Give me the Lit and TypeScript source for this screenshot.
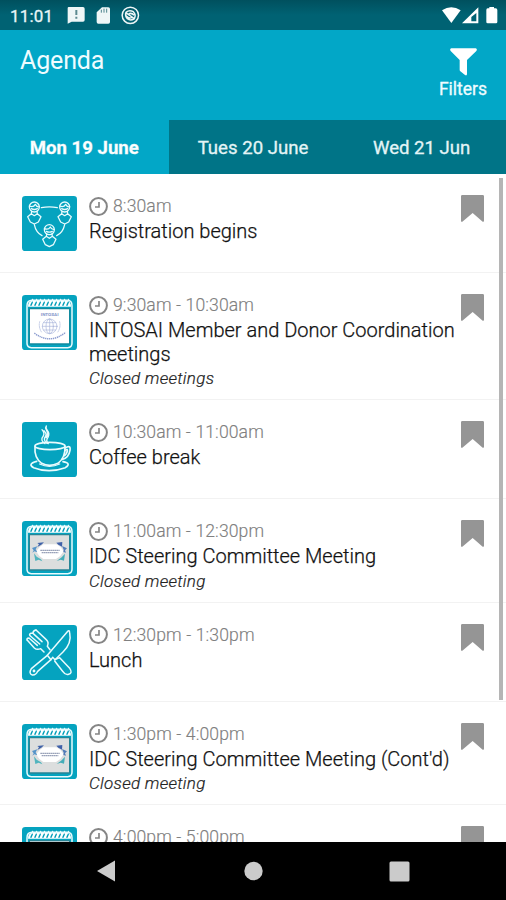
import { LitElement, html, svg, css, nothing } from "lit";
import { customElement, property, state } from "lit/decorators.js";
import { classMap } from "lit/directives/class-map.js";

type Kind = "people" | "seal" | "coffee" | "idc" | "lunch";
interface Session {
  kind: Kind;
  time: string;
  title?: string;
  note?: string;
}

const sessions: Session[] = [
  { kind: "people", time: "8:30am", title: "Registration begins" },
  { kind: "seal", time: "9:30am - 10:30am", title: "INTOSAI Member and Donor Coordination meetings", note: "Closed meetings" },
  { kind: "coffee", time: "10:30am - 11:00am", title: "Coffee break" },
  { kind: "idc", time: "11:00am - 12:30pm", title: "IDC Steering Committee Meeting", note: "Closed meeting" },
  { kind: "lunch", time: "12:30pm - 1:30pm", title: "Lunch" },
  { kind: "idc", time: "1:30pm - 4:00pm", title: "IDC Steering Committee Meeting (Cont'd)", note: "Closed meeting" },
  { kind: "idc", time: "4:00pm - 5:00pm" },
];

const person = (x: number, y: number) => svg`
  <g transform="translate(${x} ${y})">
    <circle r="15" cy="-17"/>
    <path d="M-15-20Q-3-15 3-25Q7-16 15-18M-9-12Q0-7 9-12"/>
    <path d="M-8-4L-9 3L-20 12L-12 28L0 34L12 28L20 12L9 3L8-4M-9 3L0 9L9 3"/>
  </g>`;

const calendar = svg`
  <path d="M15 145V32Q15 16 30 16H136Q150 16 150 32V145Q150 158 137 158H28Q15 158 15 145Z" stroke-width="4.5"/>
  <path d="M18 35Q18 18 30 18H135Q147 18 147 35Z" fill="#fff" stroke="none"/>
  <path d="M27 31L31 21M39 31L43 21M51 31L55 21M63 31L67 21M75 31L79 21M87 31L91 21M99 31L103 21M111 31L115 21M123 31L127 21M135 31L139 21" stroke="#05a0ba" stroke-width="4.5"/>
  <path d="M29 20L32 13M41 20L44 13M53 20L56 13M65 20L68 13M77 20L80 13M89 20L92 13M101 20L104 13M113 20L116 13M125 20L128 13M137 20L140 13" stroke-width="4"/>`;

const art: Record<Kind, unknown> = {
  people: svg`
    <g stroke-width="3.8">
      ${person(37, 50)}${person(128, 50)}${person(82, 118)}
      <path d="M58 35Q82 30 106 35M37 86Q42 110 60 119M104 119Q123 110 128 86"/>
    </g>`,
  seal: svg`
    ${calendar}
    <rect x="22" y="41" width="121" height="106" rx="2" fill="#fff" stroke="#128a9e" stroke-width="4"/>
    <g stroke="#a9b5db" stroke-width="2">
      <circle cx="83" cy="94" r="22"/>
      <ellipse cx="83" cy="94" rx="11" ry="22"/>
      <path d="M83 72V116M61 94H105M65 83H101M65 105H101"/>
      <path d="M53 80Q49 97 59 112M113 80Q117 97 107 112" stroke-dasharray="4 3"/>
      <path d="M37 114Q83 150 131 112" stroke="#8d9dd0" stroke-width="4.5" stroke-linecap="butt" stroke-dasharray="4 2"/>
    </g>
    <text x="83" y="64" class="tiny" textLength="53" lengthAdjust="spacingAndGlyphs">INTOSAI</text>`,
  coffee: svg`
    <g stroke-width="5">
      <ellipse cx="84" cy="72" rx="45" ry="11"/>
      <path d="M39 73Q36 107 59 124Q82 136 108 124Q131 106 129 73"/>
      <path d="M129 78Q147 67 144 85Q140 108 121 112M130 85Q138 79 136 88Q133 99 125 102"/>
      <path d="M44 118Q15 126 35 137Q80 155 130 137Q150 124 123 119"/>
      <path d="M53 126Q82 140 113 126" stroke-width="4"/>
      <path d="M69 65Q53 55 64 42Q69 34 60 23M75 64Q62 54 71 42Q75 35 66 26M73 47Q80 35 73 24Q69 17 73 12Q70 18 76 25Q84 34 78 46Q70 56 79 65" stroke-width="4"/>
    </g>`,
  idc: svg`
    ${calendar}
    <rect x="22" y="41" width="121" height="106" rx="2" fill="#dcdede" stroke="#278596" stroke-width="4"/>
    <path d="M54 77L64 70H103L115 77L125 91L115 105L102 114H64L52 105L42 91Z" fill="#fff" stroke="none"/>
    <g stroke="none">
      <path d="M46 66L66 64L58 71L46 78L51 70Z" fill="#3f62a8"/>
      <path d="M30 81L46 76L41 85L46 94L37 91L31 95L35 88Z" fill="#5694c9"/>
      <path d="M36 97L44 107L57 115L61 121L50 116L40 120Z" fill="#51b4be"/>
      <path d="M103 65L121 63L120 77L109 71Z" fill="#3e60a9"/>
      <path d="M120 75L135 82L129 88L132 95L124 93L125 86Z" fill="#527cb8"/>
      <path d="M129 98L126 119L116 116L104 120L119 109Z" fill="#45adb8"/>
    </g>
    <path d="M55 88H113M59 95H109" stroke="#98a1b8" stroke-width="3.5" stroke-linecap="butt" stroke-dasharray="5 1"/>`,
  lunch: svg`
    <g stroke-width="4.5">
      <path d="M16 46L37 69Q45 76 56 71L66 81M42 15L72 43Q82 51 76 64L84 74"/>
      <path d="M16 46Q12 39 21 39L46 61M25 33L53 57M33 25L60 50M25 33Q20 28 26 25L33 25Q32 17 42 15"/>
      <path d="M76 91L136 20Q142 13 143 23Q150 55 123 81L99 104L92 97L87 104L76 91"/>
      <path d="M76 91L28 131Q19 146 31 150Q42 151 47 139L87 104"/>
      <path d="M99 104L113 98L143 130Q153 144 140 148Q130 151 123 140L98 108"/>
      <circle cx="36" cy="138" r="2"/>
    </g>`,
};

@customElement("session-row")
export class SessionRow extends LitElement {
  @property({ attribute: false }) session!: Session;

  static styles = css`
    :host { display: block; border-bottom: 1px solid #f2f2f2; box-sizing: border-box; min-height: 99px; }
    .row { display: flex; padding: 22px 22px 0 22px; }
    .tile { flex: none; width: 55px; height: 55px; display: block; }
    .copy { flex: 1; min-width: 0; padding: 0 0 10px 12px; margin-right: -8px; }
    .when { display: flex; align-items: center; gap: 5px; height: 20px; font-size: 17.6px; font-weight: 300; color: #808080; letter-spacing: 0.1px; -webkit-text-stroke: 0.15px #808080; }
    .clock { width: 19px; height: 19px; flex: none; }
    .title { font-size: 20px; font-weight: 300; line-height: 23.5px; color: #111; margin-top: 4px; -webkit-text-stroke: 0.25px #111; }
    .note { font-size: 17px; line-height: 21px; padding-top: 2px; font-weight: 300; font-style: italic; color: #222; letter-spacing: 0.28px; -webkit-text-stroke: 0.2px #222; }
    .mark { flex: none; width: 23px; height: 27px; margin-top: -1px; }
    .tiny { font: bold 12px Roboto, sans-serif; fill: #8395c9; stroke: none; text-anchor: middle; }
  `;

  render() {
    const s = this.session;
    return html`<div class="row">
      <svg class="tile" viewBox="0 0 165 165" fill="none" stroke="#e9fbfd" stroke-linecap="round" stroke-linejoin="round">
        <rect width="165" height="165" rx="10" fill="#05a3bf" stroke="none"></rect>
        ${art[s.kind]}
      </svg>
      <div class="copy">
        <div class="when">
          <svg class="clock" viewBox="0 0 57 57" fill="none" stroke="#858585" stroke-width="6">
            <circle cx="28.5" cy="28.5" r="25.2"></circle><path d="M30 15V30H18" stroke-width="5"></path>
          </svg>
          <span>${s.time}</span>
        </div>
        ${s.title ? html`<div class="title">${s.title}</div>` : nothing}
        ${s.note ? html`<div class="note">${s.note}</div>` : nothing}
      </div>
      <svg class="mark" viewBox="0 0 69 81"><path d="M4 0H65Q69 0 69 4V78Q69 81 65 80L35 54L4 80Q0 82 0 77V4Q0 0 4 0Z" fill="#959595"/></svg>
    </div>`;
  }
}

@customElement("app-root")
export class AppRoot extends LitElement {
  @state() private day = 0;
  private days = ["Mon 19 June", "Tues 20 June", "Wed 21 Jun"];

  static styles = css`
    :host { display: flex; flex-direction: column; height: 900px; width: 506px; overflow: hidden; background: #fff; font-family: Roboto, sans-serif; }
    .status { flex: none; height: 30px; display: flex; align-items: center; justify-content: space-between; background: linear-gradient(#00505e, #006273 50%, #006273); color: #fff; padding: 0 7px 0 10px; }
    .left { display: flex; align-items: center; }
    .clock { font-size: 17px; line-height: 30px; padding-top: 2px; width: 56px; letter-spacing: 0.2px; color: #e8f5f7; -webkit-text-stroke: 0.3px #e8f5f7; }
    .sys { display: block; height: 30px; }
    .header { flex: none; height: 90px; background: #02a7c7; color: #effcff; display: flex; justify-content: space-between; padding: 0 19px 0 20px; box-sizing: border-box; }
    .heading { margin: 0; font-size: 25px; font-weight: 400; line-height: 30px; padding-top: 16px; letter-spacing: -0.15px; }
    .filters { display: flex; flex-direction: column; align-items: center; padding-top: 18px; font-size: 17.5px; line-height: 22px; width: 48px; -webkit-text-stroke: 0.3px #effcff; }
    .funnel { width: 27px; height: 28px; margin-bottom: 2px; }
    .tabs { flex: none; height: 54px; display: grid; grid-template-columns: repeat(3, 1fr); background: #007487; }
    .tab { display: flex; align-items: center; justify-content: center; font-size: 18.6px; color: #e4f4f6; padding-top: 2px; white-space: nowrap; -webkit-text-stroke: 0.3px #e4f4f6; }
    .tab.on { background: #02a7c7; color: #fff; font-weight: 700; }
    .list { flex: 1; min-height: 0; overflow: hidden; position: relative; }
    .thumb { position: absolute; right: 3px; top: 4px; width: 4px; height: 522px; background: #b5b5b5; }
    .nav { flex: none; height: 58px; background: #000; }
    .keys { display: block; width: 506px; height: 58px; }
  `;

  render() {
    return html`
      <div class="status">
        <div class="left">
          <span class="clock">11:01</span>
          <svg class="sys" width="76" viewBox="0 0 228 90" fill="#eef6f7">
            <path d="M8 21H51Q56 21 56 26V60Q56 65 51 65H17L5 71V25Q5 21 8 21Z"/>
            <path d="M28 30H34V45H28ZM28 50H34V56H28Z" fill="#5b8990"/>
            <path d="M108 22H127Q132 22 132 27V66Q132 71 127 71H97Q92 71 92 66V37Z"/>
            <path d="M106 29V38M114 26V38M122 26V38" stroke="#4f858e" stroke-width="3"/>
            <circle cx="193" cy="46" r="24.5" fill="none" stroke="#eef6f7" stroke-width="4.5"/>
            <path d="M180 37Q190 28 202 35Q212 45 204 57Q193 63 184 56Q176 47 180 37ZM179 38L207 57M187 43Q196 36 204 46M181 48Q188 57 199 52" fill="none" stroke="#eef6f7" stroke-width="4.5"/>
          </svg>
        </div>
        <svg class="sys" width="58" viewBox="566 0 174 90" fill="#fff">
          <path d="M569 31Q597 12 625 31L597 69Z"/>
          <path d="M678 22V70H629ZM672 39L657 51V64H672Z" fill-rule="evenodd"/>
          <path d="M711 21H725V25H730Q735 25 735 30V66Q735 70 731 70H706Q702 70 702 66V30Q702 25 706 25H711Z"/>
        </svg>
      </div>
      <div class="header">
        <h1 class="heading">Agenda</h1>
        <div class="filters">
          <svg class="funnel" viewBox="0 0 81 84" fill="#fff"><path d="M4 1H77Q83 3 79 9L51 36V79Q50 84 45 81L31 70Q29 68 29 65V36L2 9Q-2 3 4 1Z"/></svg>
          <span>Filters</span>
        </div>
      </div>
      <div class="tabs">
        ${this.days.map((d, i) => html`<div class=${classMap({ tab: true, on: i === this.day })} @click=${() => (this.day = i)}>${d}</div>`)}
      </div>
      <div class="list">
        ${sessions.map((s) => html`<session-row .session=${s}></session-row>`)}
        <div class="thumb"></div>
      </div>
      <div class="nav">
        <svg class="keys" viewBox="0 0 506 58" fill="#cbcbcb">
          <path d="M97 29L115 18.5V39.5Z"/><circle cx="253.5" cy="29" r="9.2"/><rect x="389.5" y="19.5" width="20" height="20" rx="1.5"/>
        </svg>
      </div>`;
  }
}
